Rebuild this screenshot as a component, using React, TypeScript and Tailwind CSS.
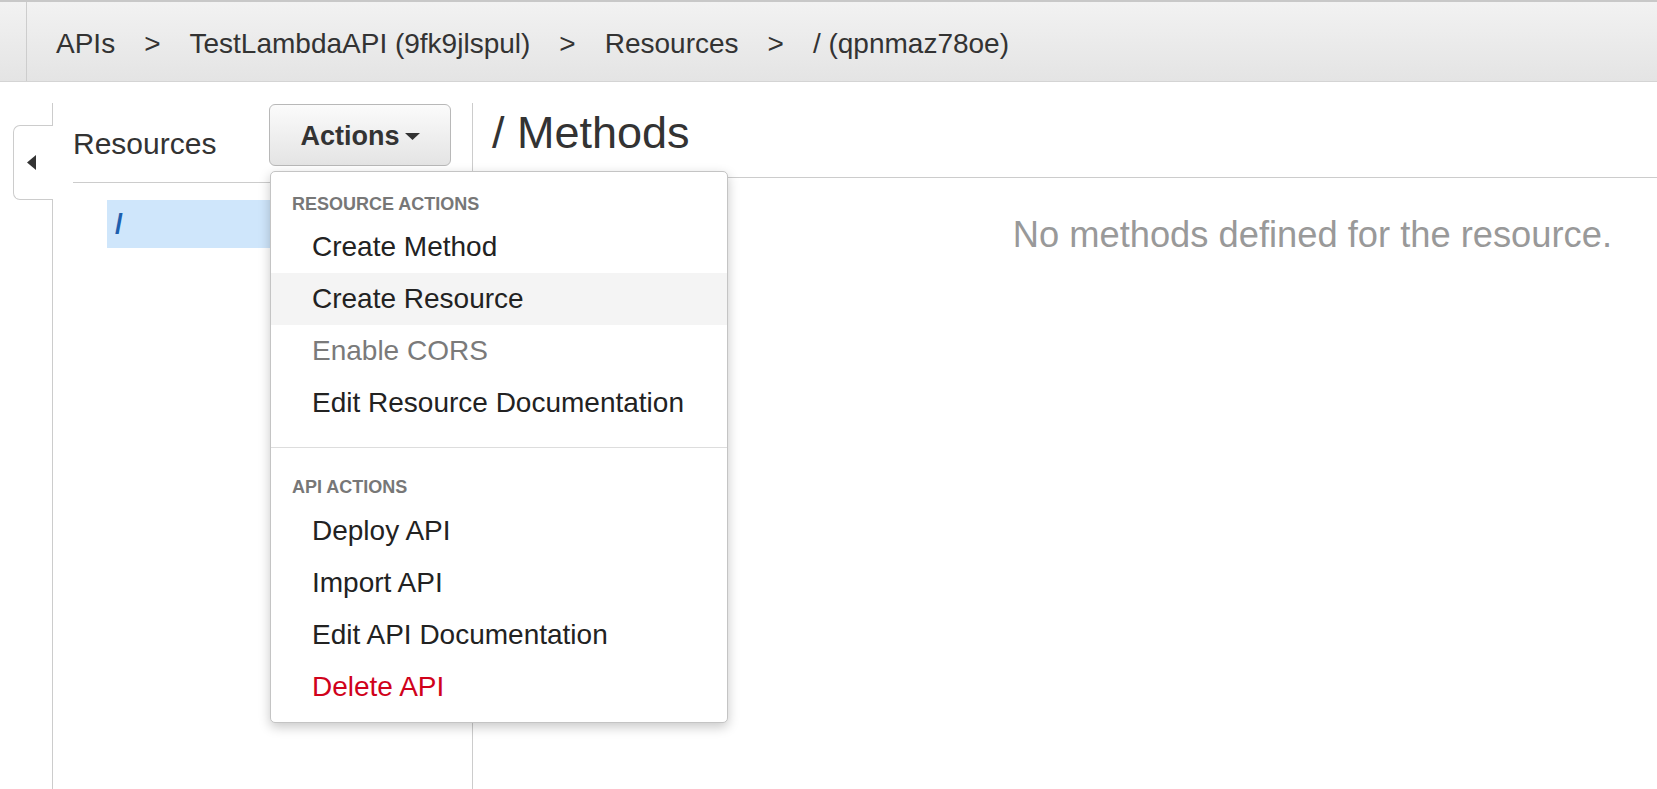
const resourceActions = [
  { label: 'Create Method' },
  { label: 'Create Resource', hover: true },
  { label: 'Enable CORS', disabled: true },
  { label: 'Edit Resource Documentation' },
];

const apiActions = [
  { label: 'Deploy API' },
  { label: 'Import API' },
  { label: 'Edit API Documentation' },
  { label: 'Delete API', danger: true },
];

type Item = { label: string; hover?: boolean; disabled?: boolean; danger?: boolean };

function MenuItem({ item }: { item: Item }) {
  let color = 'text-[#222]';
  if (item.disabled) color = 'text-[#7a7a7a]';
  if (item.danger) color = 'text-[#d0021b]';
  return (
    <div
      className={`h-[52px] pl-[41px] flex items-center text-[28px] leading-none ${color} ${
        item.hover ? 'bg-[#f4f4f4]' : ''
      }`}
    >
      {item.label}
    </div>
  );
}

function Crumb({ children }: { children: React.ReactNode }) {
  return <span className="whitespace-nowrap">{children}</span>;
}

function Sep() {
  return <span className="mx-[29px]">&gt;</span>;
}

export default function App() {
  return (
    <div className="w-[1657px] h-[789px] bg-white overflow-hidden flex flex-col font-['Liberation_Sans',Arial,sans-serif]">
      {/* breadcrumb bar */}
      <header className="h-[82px] shrink-0 flex border-t-2 border-t-[#c8c8c8] border-b border-b-[#d4d4d4] bg-gradient-to-b from-[#f2f2f2] to-[#e4e4e4]">
        <div className="w-[27px] h-full border-r border-[#cdcdcd]" />
        <nav className="flex items-center pl-[29px] pt-[4px] text-[28px] text-[#333]">
          <Crumb>APIs</Crumb>
          <Sep />
          <Crumb>TestLambdaAPI (9fk9jlspul)</Crumb>
          <Sep />
          <Crumb>Resources</Crumb>
          <Sep />
          <Crumb>/ (qpnmaz78oe)</Crumb>
        </nav>
      </header>

      <div className="flex flex-1 pt-[21px]">
        {/* collapse tab column */}
        <div className="w-[53px] shrink-0 flex flex-col">
          <div className="h-[22px] border-r border-[#cccccc]" />
          <div className="ml-[13px] w-[40px] h-[75px] border-y border-l border-[#cccccc] rounded-l-[7px] flex items-center justify-center pr-[5px]">
            <svg width="9" height="15" viewBox="0 0 9 15">
              <path d="M9 0 L0 7.5 L9 15 Z" fill="#333" />
            </svg>
          </div>
          <div className="flex-1 border-r border-[#cccccc]" />
        </div>

        {/* resources panel */}
        <div className="relative w-[420px] shrink-0 border-r border-[#cccccc]">
          <div className="h-[80px] ml-[20px] mr-[20px] flex items-start border-b border-[#cccccc]">
            <div className="w-[196px] mt-[26px] text-[30px] leading-none text-[#333]">Resources</div>
            <button className="w-[182px] h-[62px] mt-[1px] rounded-[6px] border border-[#b8b8b8] bg-gradient-to-b from-[#fbfbfb] to-[#e4e4e4] flex items-center justify-center gap-[5px] text-[27px] font-bold text-[#333] pt-[2px]">
              Actions
              <svg width="15" height="8" viewBox="0 0 15 8" className="mt-[2px]">
                <path d="M0 0 L15 0 L7.5 7 Z" fill="#333" />
              </svg>
            </button>
          </div>
          <div className="ml-[54px] mt-[17px] h-[48px] bg-[#cfe6fb] pl-[8px] flex items-center text-[28px] font-bold text-[#1d5fae]">
            /
          </div>

          {/* actions dropdown */}
          <div className="absolute left-[217px] top-[68px] w-[458px] z-10 rounded-[5px] border border-[#c4c4c4] bg-white shadow-[0_4px_12px_rgba(0,0,0,0.22)] pt-[20px] pb-[9px]">
            <div className="h-[24px] pl-[21px] flex items-center text-[18px] font-bold text-[#777] leading-none">
              RESOURCE ACTIONS
            </div>
            <div className="mt-[5px]">
              {resourceActions.map((item) => (
                <MenuItem key={item.label} item={item} />
              ))}
            </div>
            <div className="mt-[18px] border-t border-[#dddddd]" />
            <div className="mt-[27px] h-[24px] pl-[21px] flex items-center text-[18px] font-bold text-[#777] leading-none">
              API ACTIONS
            </div>
            <div className="mt-[6px]">
              {apiActions.map((item) => (
                <MenuItem key={item.label} item={item} />
              ))}
            </div>
          </div>
        </div>

        {/* methods panel */}
        <main className="flex-1 flex flex-col">
          <div className="h-[75px] border-b border-[#cccccc] pl-[19px] pt-[7px] text-[45px] leading-none text-[#333]">
            / Methods
          </div>
          <p className="mt-[39px] pr-[45px] text-right text-[36.3px] leading-none text-[#999]">
            No methods defined for the resource.
          </p>
        </main>
      </div>
    </div>
  );
}
